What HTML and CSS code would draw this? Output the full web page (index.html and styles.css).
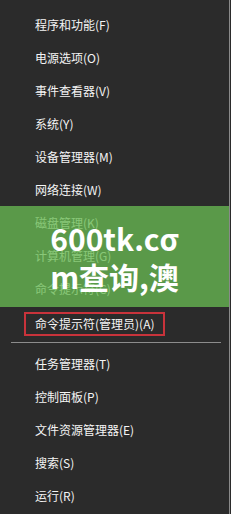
FILE: index.html
```html
<!DOCTYPE html>
<html lang="zh-CN">
<head>
<meta charset="utf-8">
<title>Win+X 菜单</title>
<link rel="stylesheet" href="styles.css">
</head>
<body>
<div class="menu">
  <ul class="group">
    <li class="item">程序和功能(F)</li>
    <li class="item">电源选项(O)</li>
    <li class="item">事件查看器(V)</li>
    <li class="item">系统(Y)</li>
    <li class="item">设备管理器(M)</li>
    <li class="item">网络连接(W)</li>
    <li class="item">磁盘管理(K)</li>
    <li class="item">计算机管理(G)</li>
    <li class="item">命令提示符(C)</li>
    <li class="item"><span class="selected">命令提示符(管理员)(A)</span></li>
  </ul>
  <div class="sep"></div>
  <ul class="group">
    <li class="item">任务管理器(T)</li>
    <li class="item">控制面板(P)</li>
    <li class="item">文件资源管理器(E)</li>
    <li class="item">搜索(S)</li>
    <li class="item">运行(R)</li>
  </ul>
  <div class="banner">
    <span class="banner-line">600tk.cσ</span>
    <span class="banner-line">m查询,澳</span>
  </div>
</div>
</body>
</html>
```
FILE: styles.css
```css
html, body {
  margin: 0;
  padding: 0;
  background: #2b2b2b;
}
.menu {
  position: relative;
  width: 230px;
  height: 514px;
  box-sizing: border-box;
  background: #2b2b2b;
  border-right: 1px solid #8a8a8a;
  padding-top: 8px;
  font-family: "Noto Sans CJK SC", "Noto Sans", sans-serif;
  font-size: 12px;
  color: #f4f4f4;
}
.group {
  list-style: none;
  margin: 0;
  padding: 0;
}
.item {
  height: 33px;
  line-height: 33px;
  padding-left: 35px;
  white-space: nowrap;
}
.selected {
  display: inline-block;
  height: 20px;
  line-height: 20px;
  margin-left: -11px;
  padding: 0 8px 0 9px;
  border: 2px solid #c8333b;
  vertical-align: middle;
}
.sep {
  height: 1px;
  margin: 4px 8px 4px 11px;
  background: #8c8c8c;
}
.banner {
  position: absolute;
  left: 0;
  top: 206px;
  width: 229px;
  height: 101px;
  background: rgba(104, 186, 82, 0.77);
  display: flex;
  flex-direction: column;
  align-items: center;
  justify-content: center;
  font-family: "Noto Sans CJK SC", "Noto Sans", sans-serif;
  font-weight: 700;
  font-size: 30px;
  line-height: 38px;
  color: #ffffff;
}
.banner-line {
  display: block;
  white-space: nowrap;
}
```
